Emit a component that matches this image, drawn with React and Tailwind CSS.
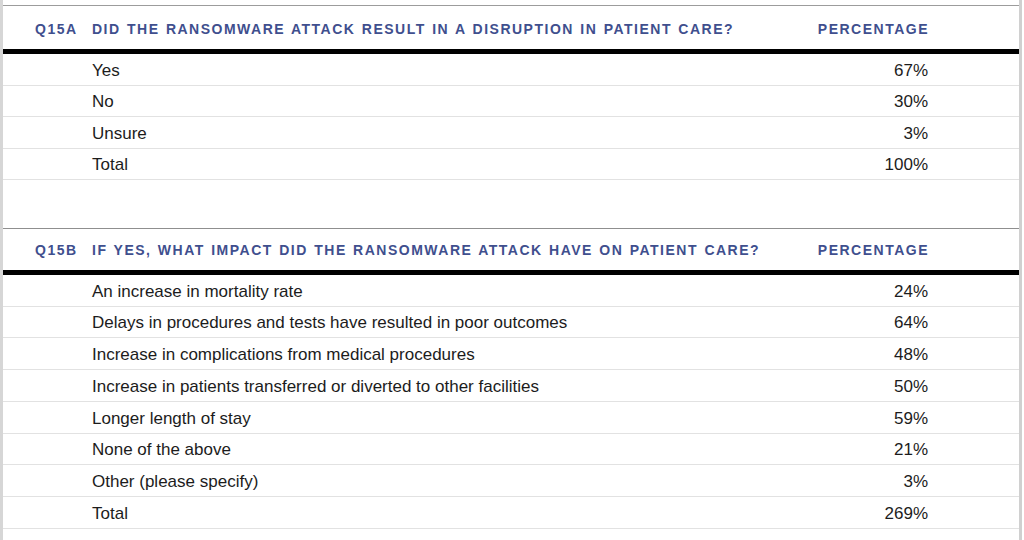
import React from 'react';

const tables = [
  {
    id: 'Q15A',
    question: 'DID THE RANSOMWARE ATTACK RESULT IN A DISRUPTION IN PATIENT CARE?',
    rows: [
      ['Yes', '67%'],
      ['No', '30%'],
      ['Unsure', '3%'],
      ['Total', '100%'],
    ],
  },
  {
    id: 'Q15B',
    question: 'IF YES, WHAT IMPACT DID THE RANSOMWARE ATTACK HAVE ON PATIENT CARE?',
    rows: [
      ['An increase in mortality rate', '24%'],
      ['Delays in procedures and tests have resulted in poor outcomes', '64%'],
      ['Increase in complications from medical procedures', '48%'],
      ['Increase in patients transferred or diverted to other facilities', '50%'],
      ['Longer length of stay', '59%'],
      ['None of the above', '21%'],
      ['Other (please specify)', '3%'],
      ['Total', '269%'],
    ],
  },
];

function SurveyTable({ table, headerHeight, rowHeight }) {
  return (
    <div>
      <div
        className={`flex items-center pt-[3px] ${headerHeight} text-[14px] font-bold tracking-[1.5px] [word-spacing:1px] text-[#3f4f8e]`}
      >
        <span className="w-[57px] pl-[32px] box-content shrink-0">{table.id}</span>
        <span className="flex-1">{table.question}</span>
        <span className="pr-[90px]">PERCENTAGE</span>
      </div>
      <div className="h-[5px] bg-black" />
      {table.rows.map(([label, value]) => (
        <div
          key={label}
          className={`flex items-center pt-[2px] ${rowHeight} border-b border-[#e2e2e2] text-[17px] text-[#1c1c1c]`}
        >
          <span className="flex-1 pl-[89px]">{label}</span>
          <span className="pr-[91px]">{value}</span>
        </div>
      ))}
    </div>
  );
}

export default function App() {
  return (
    <div className="flex w-[1024px] h-[540px] bg-white overflow-hidden font-['Liberation_Sans',Arial,sans-serif]">
      <div className="w-[3px] shrink-0 bg-[#d6d6d6]" />
      <div className="w-[1016px] shrink-0">
        <div className="h-[5px]" />
        <div className="h-px bg-[#9c9c9c]" />
        <SurveyTable table={tables[0]} headerHeight="h-[43px]" rowHeight="h-[31.6px]" />
        <div className="h-[47.6px]" />
        <div className="h-px bg-[#8f8f8f]" />
        <SurveyTable table={tables[1]} headerHeight="h-[41px]" rowHeight="h-[31.75px]" />
      </div>
      <div className="w-[3px] shrink-0 bg-[#d0d0d0]" />
      <div className="flex-1" />
    </div>
  );
}
